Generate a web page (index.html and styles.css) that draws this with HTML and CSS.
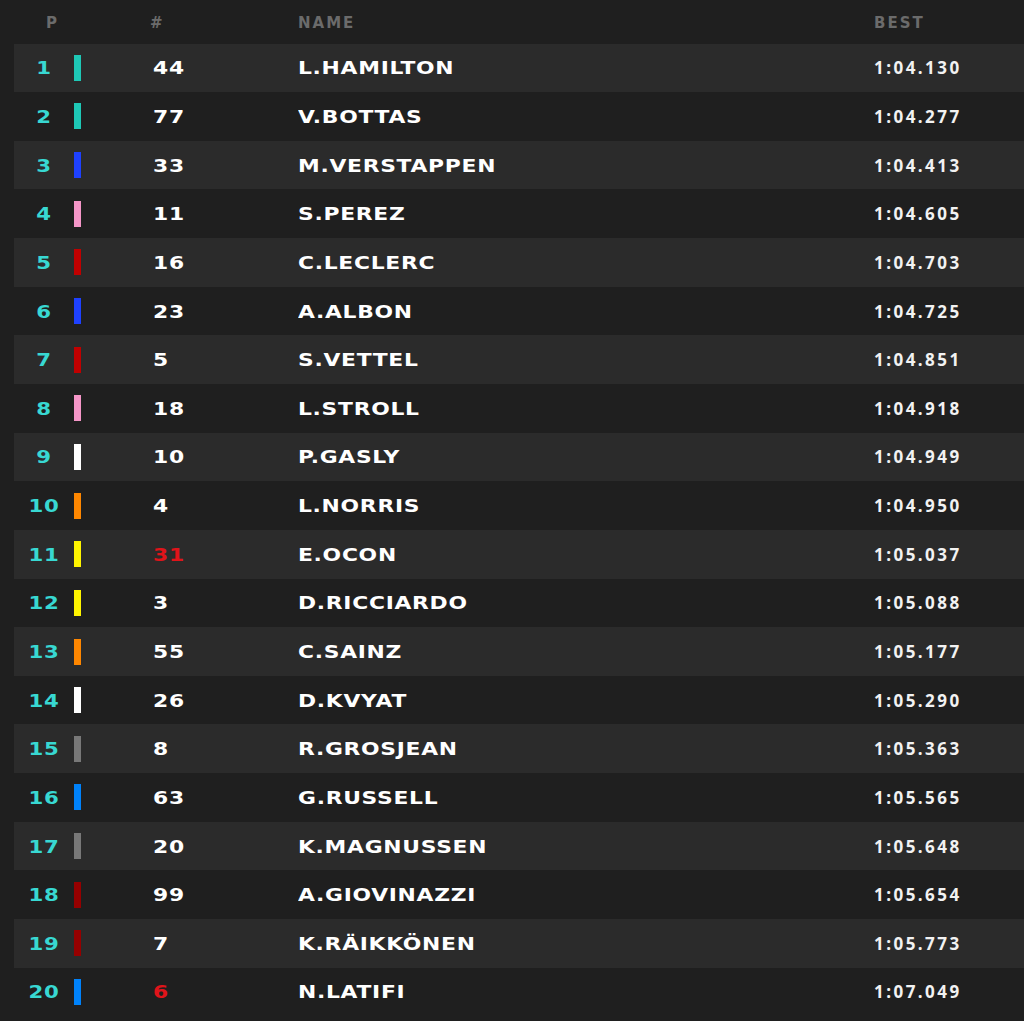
FILE: index.html
```html
<!DOCTYPE html>
<html lang="en">
<head>
<meta charset="utf-8">
<title>Classification</title>
<link rel="stylesheet" href="styles.css">
</head>
<body>
<div class="board">
  <div class="head">
    <div class="h-pos">P</div>
    <div class="h-num">#</div>
    <div class="h-name">NAME</div>
    <div class="h-best">BEST</div>
  </div>
  <div class="row"><div class="pos">1</div><div class="bar merc"></div><div class="num">44</div><div class="name">L.HAMILTON</div><div class="best">1:04.130</div></div>
  <div class="row"><div class="pos">2</div><div class="bar merc"></div><div class="num">77</div><div class="name">V.BOTTAS</div><div class="best">1:04.277</div></div>
  <div class="row"><div class="pos">3</div><div class="bar rbr"></div><div class="num">33</div><div class="name">M.VERSTAPPEN</div><div class="best">1:04.413</div></div>
  <div class="row"><div class="pos">4</div><div class="bar rp"></div><div class="num">11</div><div class="name">S.PEREZ</div><div class="best">1:04.605</div></div>
  <div class="row"><div class="pos">5</div><div class="bar fer"></div><div class="num">16</div><div class="name">C.LECLERC</div><div class="best">1:04.703</div></div>
  <div class="row"><div class="pos">6</div><div class="bar rbr"></div><div class="num">23</div><div class="name">A.ALBON</div><div class="best">1:04.725</div></div>
  <div class="row"><div class="pos">7</div><div class="bar fer"></div><div class="num">5</div><div class="name">S.VETTEL</div><div class="best">1:04.851</div></div>
  <div class="row"><div class="pos">8</div><div class="bar rp"></div><div class="num">18</div><div class="name">L.STROLL</div><div class="best">1:04.918</div></div>
  <div class="row"><div class="pos">9</div><div class="bar at"></div><div class="num">10</div><div class="name">P.GASLY</div><div class="best">1:04.949</div></div>
  <div class="row"><div class="pos">10</div><div class="bar mcl"></div><div class="num">4</div><div class="name">L.NORRIS</div><div class="best">1:04.950</div></div>
  <div class="row"><div class="pos">11</div><div class="bar ren"></div><div class="num red">31</div><div class="name">E.OCON</div><div class="best">1:05.037</div></div>
  <div class="row"><div class="pos">12</div><div class="bar ren"></div><div class="num">3</div><div class="name">D.RICCIARDO</div><div class="best">1:05.088</div></div>
  <div class="row"><div class="pos">13</div><div class="bar mcl"></div><div class="num">55</div><div class="name">C.SAINZ</div><div class="best">1:05.177</div></div>
  <div class="row"><div class="pos">14</div><div class="bar at"></div><div class="num">26</div><div class="name">D.KVYAT</div><div class="best">1:05.290</div></div>
  <div class="row"><div class="pos">15</div><div class="bar haas"></div><div class="num">8</div><div class="name">R.GROSJEAN</div><div class="best">1:05.363</div></div>
  <div class="row"><div class="pos">16</div><div class="bar wil"></div><div class="num">63</div><div class="name">G.RUSSELL</div><div class="best">1:05.565</div></div>
  <div class="row"><div class="pos">17</div><div class="bar haas"></div><div class="num">20</div><div class="name">K.MAGNUSSEN</div><div class="best">1:05.648</div></div>
  <div class="row"><div class="pos">18</div><div class="bar alfa"></div><div class="num">99</div><div class="name">A.GIOVINAZZI</div><div class="best">1:05.654</div></div>
  <div class="row"><div class="pos">19</div><div class="bar alfa"></div><div class="num">7</div><div class="name">K.RÄIKKÖNEN</div><div class="best">1:05.773</div></div>
  <div class="row"><div class="pos">20</div><div class="bar wil"></div><div class="num red">6</div><div class="name">N.LATIFI</div><div class="best">1:07.049</div></div>
</div>
</body>
</html>
```

FILE: styles.css
```css
html, body {
  margin: 0;
  padding: 0;
  background: #1f1f1f;
}

.board {
  width: 1024px;
  height: 1021px;
  overflow: hidden;
  background: #1f1f1f;
}

.head {
  height: 43.5px;
  box-sizing: border-box;
  padding-top: 2px;
  display: flex;
  align-items: center;
  font-family: "DejaVu Sans", sans-serif;
  font-size: 15px;
  font-weight: bold;
  letter-spacing: 2px;
  color: #6b6b6b;
}

.h-pos { width: 150px; padding-left: 46px; box-sizing: border-box; }
.h-num { width: 148px; }
.h-name { width: 576px; }

.row {
  margin-left: 14px;
  height: 48.65px;
  display: flex;
  align-items: center;
  font-family: "DejaVu Sans", sans-serif;
  font-weight: bold;
  font-size: 18.5px;
  letter-spacing: 0.6px;
  color: #ffffff;
}

.row:nth-child(even) {
  background: #2b2b2b;
}

.pos {
  width: 60px;
  text-align: center;
  color: #38d8d2;
  transform: scaleX(1.15);
}

.bar {
  width: 7px;
  height: 26px;
}

.num {
  margin-left: 72px;
  width: 145px;
  transform: scaleX(1.18);
  transform-origin: left center;
}

.num.red { color: #e0141a; }

.name {
  flex: 1;
  transform: scaleX(1.18);
  transform-origin: left center;
}

.best {
  width: 150px;
  font-family: "Open Sans", sans-serif;
  font-weight: bold;
  font-size: 17px;
  letter-spacing: 2.45px;
  color: #f2f2f2;
}

.merc { background: #1ec8b6; }
.rbr  { background: #1e41ff; }
.rp   { background: #f596c8; }
.fer  { background: #c00000; }
.at   { background: #ffffff; }
.mcl  { background: #ff8700; }
.ren  { background: #fff500; }
.haas { background: #787878; }
.wil  { background: #0082fa; }
.alfa { background: #960000; }
```
